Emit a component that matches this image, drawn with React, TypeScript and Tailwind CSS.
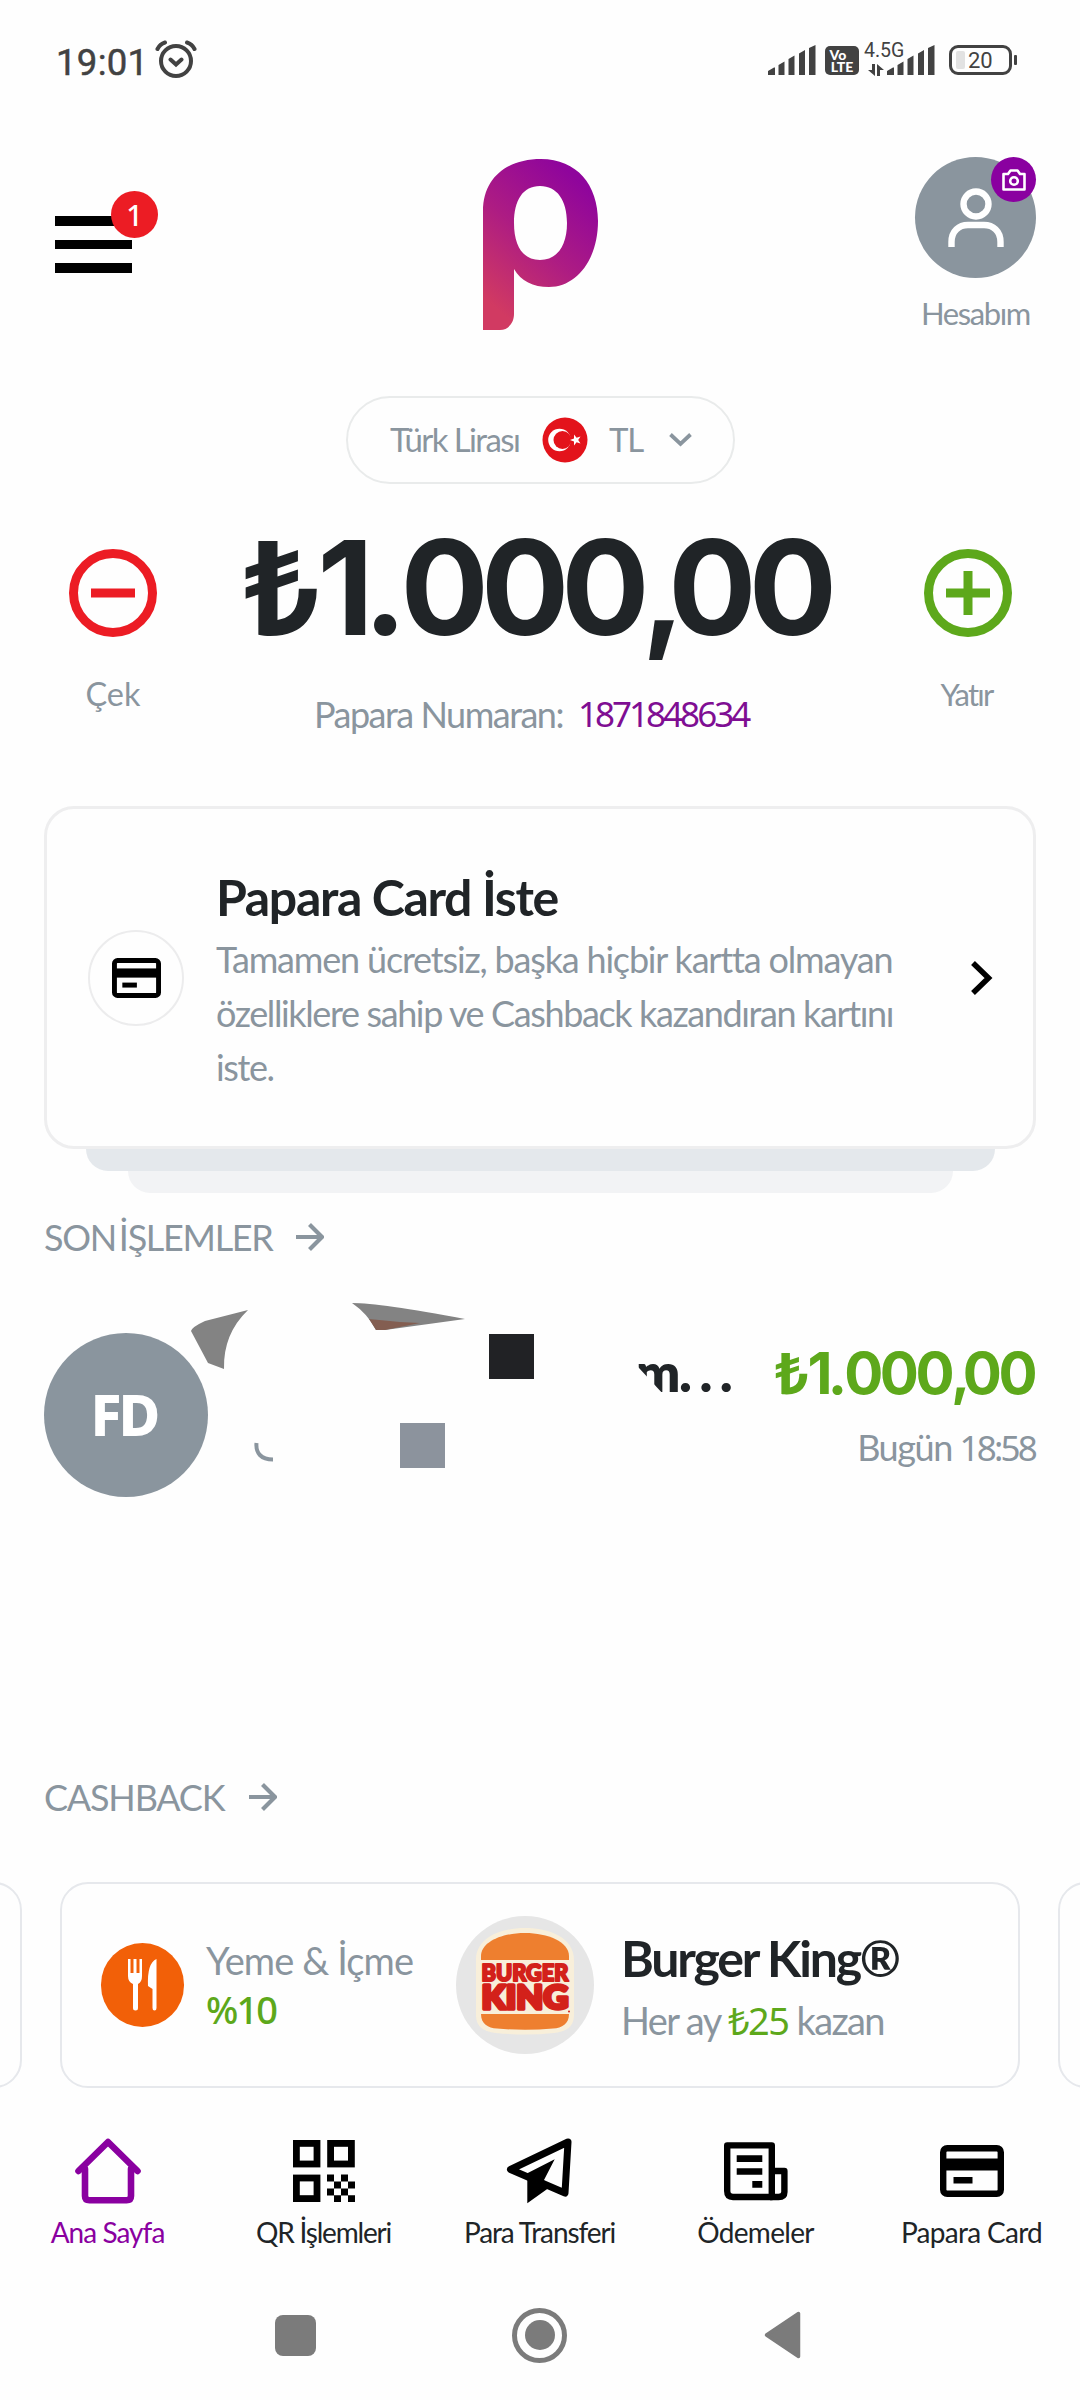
import React from 'react';

const CardIcon = ({ className }: { className: string }) => (
  <svg viewBox="0 0 64 52" className={className}>
    <rect x="3.2" y="3.2" width="57.6" height="45.6" rx="4" fill="none" stroke="black" strokeWidth="6.4" />
    <rect x="4" y="13.5" width="56" height="12" fill="black" />
    <rect x="13.5" y="32" width="19" height="6.5" fill="black" />
  </svg>
);

const HomeIcon = () => (
  <svg width="66" height="66" viewBox="0 0 66 66" fill="none" stroke="#8a00a0" strokeWidth="6.6" strokeLinecap="round" strokeLinejoin="round">
    <path d="M3.5 33L33 4L62.5 33" />
    <path d="M10 31V58Q10 62.3 14.5 62.3H51.5Q56 62.3 56 58V31" />
  </svg>
);

const QrIcon = () => (
  <svg width="62" height="62" viewBox="0 0 62 62">
    <g fill="none" stroke="black" strokeWidth="6.8">
      <rect x="3.4" y="3.4" width="20.6" height="20.6" />
      <rect x="37.6" y="3.4" width="20.8" height="20.6" />
      <rect x="3.4" y="38" width="20.6" height="20.6" />
    </g>
    <path d="M34 34.6h7v7h-7zM48 34.6h7v7h-7zM41 41.6h7v7h-7zM55 41.6h7v7h-7zM34 48.4h7v7h-7zM48 48.4h7v7h-7zM41 55.2h7v6.8h-7zM55 55.2h7v6.8h-7z" />
  </svg>
);

const SendIcon = () => (
  <svg width="68" height="68" viewBox="0 0 68 68">
    <path d="M62 5L4.5 32.5L59 56Z" fill="none" stroke="black" strokeWidth="7" strokeLinejoin="round" />
    <path d="M48.7 22.3L21.3 36.3V66.3L42.3 51.3L38 43Z" />
  </svg>
);

const BillIcon = () => (
  <svg width="64" height="59" viewBox="0 0 64 59">
    <g fill="none" stroke="black" strokeWidth="6.4" strokeLinejoin="round">
      <path d="M3.2 3.4H47.8V55H9Q3.2 55 3.2 49Z" />
      <path d="M48 29H60.4V50Q60.4 55 54.5 55H46" />
    </g>
    <path d="M12.7 13.3h25.6V20H12.7zM12.7 26.3h25.6v6.5H12.7zM28.3 39h10v6.7h-10z" />
  </svg>
);

const ArrowIcon = () => (
  <svg width="28" height="28" viewBox="0 0 28 28" fill="none" stroke="#8a959e" strokeWidth="4.2">
    <path d="M0 14H26M13.5 1.5L26 14L13.5 26.5" />
  </svg>
);

const Signal = () => (
  <svg width="48" height="30" viewBox="0 0 48 30" fill="#424242">
    <path d="M0 30V26L6 22.5H7V30ZM10.5 30V20L16.5 16.5V30ZM20.5 30V14L26.5 10.5V30ZM31 30V8.5L37 5V30ZM41 30V3L47.5 0V30Z" />
  </svg>
);

const Avatar = () => (
  <div className="relative flex h-[121px] w-[121px] items-center justify-center rounded-full bg-[#8a959e]">
    <svg width="56" height="60" viewBox="0 0 56 60" fill="none" stroke="white" strokeWidth="6.4">
      <circle cx="28" cy="16" r="12.5" />
      <path d="M3.5 59V54C3.5 43 11 37 20 37H36C45 37 52.5 43 52.5 54V59" />
    </svg>
    <div className="absolute right-0 top-0 flex h-[45px] w-[45px] items-center justify-center rounded-full bg-[#8a00a0]">
      <svg width="24" height="22" viewBox="0 0 24 22" fill="none" stroke="white" strokeWidth="2.6" strokeLinejoin="round">
        <path d="M1.5 5H6L8.5 1.5H15.5L18 5H22.5V20.5H1.5Z" />
        <circle cx="12" cy="12" r="3.8" />
      </svg>
    </div>
  </div>
);

const BurgerLogo = () => (
  <svg width="138" height="138" viewBox="0 0 138 138" className="shrink-0">
    <circle cx="69" cy="69" r="69" fill="#e6e6e6" />
    <path d="M20 44C20 22 44 12 69 12S118 22 118 44V99C118 112 108 116 98 117Q69 120 40 117C30 116 20 112 20 99Z" fill="#f8efda" />
    <path d="M25 44V40C25 26 46 17 69 17S113 26 113 40V44Z" fill="#ee7f2f" />
    <path d="M25 98H113C113 108 106 112 97 112.5Q69 115 41 112.5C32 112 25 108 25 98Z" fill="#ee7f2f" />
    <g fill="#d3211a" stroke="#d3211a" strokeLinejoin="round" fontFamily="Lato, sans-serif" fontWeight="900">
      <text x="25.5" y="65" fontSize="23.5" strokeWidth="2.2" textLength="87" lengthAdjust="spacingAndGlyphs">BURGER</text>
      <text x="25.5" y="93.3" fontSize="33" strokeWidth="3.6" textLength="87" lengthAdjust="spacingAndGlyphs">KING</text>
    </g>
    <circle cx="113" cy="95.5" r="1" fill="#d3211a" />
  </svg>
);

// Tight around the leading one and the separators
const Amount = ({ className }: { className: string }) => (
  <span className={`font-['Noto_Sans'] font-bold ${className}`}>
    <span className="tracking-[-0.02em]">₺</span>
    <span className="font-['Inter']">
      <span className="tracking-[-0.08em]">1</span>
      <span className="tracking-[-0.05em]">.</span>
      <span className="tracking-[-0.061em]">000</span>
      <span className="tracking-[-0.13em]">,</span>
      <span className="tracking-[-0.061em]">00</span>
    </span>
  </span>
);

const tabs = [
  { icon: <HomeIcon />, label: 'Ana Sayfa', style: 'text-[#8a00a0] tracking-[-0.95px]' },
  { icon: <QrIcon />, label: 'QR İşlemleri', style: 'text-[#202427] tracking-[-1.2px]' },
  { icon: <SendIcon />, label: 'Para Transferi', style: 'text-[#202427] tracking-[-1.1px]' },
  { icon: <BillIcon />, label: 'Ödemeler', style: 'text-[#202427] tracking-[-0.7px]' },
  { icon: <CardIcon className="h-[52px] w-[64px]" />, label: 'Papara Card', style: 'text-[#202427] tracking-[-0.7px]' },
];

export default function App() {
  return (
    <div className="flex h-[2400px] w-[1080px] flex-col overflow-hidden whitespace-nowrap bg-[#fefefe] font-['Lato',sans-serif] text-[#8a959e]">
      {/* Status bar */}
      <div className="flex h-[120px] shrink-0 items-start justify-between pl-[56px] pr-[63px] pt-[40px] font-['Roboto',sans-serif] text-[#424242]">
        <div className="flex">
          <span className="mt-px h-[44px] w-[99px] text-[36.5px] leading-[44px] tracking-[0.3px] [-webkit-text-stroke:0.5px_#424242]">19:01</span>
          <svg width="42" height="38" viewBox="0 0 42 38" fill="none" stroke="#424242" strokeWidth="4" strokeLinecap="round">
            <circle cx="21" cy="21" r="15" />
            <path d="M2.5 9Q5 4 10 2.5M39.5 9Q37 4 32 2.5M15.5 19.5L21 24.5L26.5 19.5" />
          </svg>
        </div>
        <div className="flex">
          <div className="mt-[5px]"><Signal /></div>
          <div className="ml-[9px] mt-[6px] flex h-[29px] w-[34px] flex-col items-center justify-center rounded-[5px] bg-[#424242] font-['Lato'] text-[14px] font-black leading-[12px] text-white">
            <span className="-ml-[8px]">Vo</span>
            <span>LTE</span>
          </div>
          <div className="ml-[5px] flex w-[23px] flex-col">
            <span className="h-[22px] text-[19.5px] leading-[22px]">4.5G</span>
            <svg width="16" height="12" viewBox="0 0 16 12" fill="#424242" className="ml-[4px] mt-[2px]">
              <path d="M4 0H7V12L0 6H4ZM9 12V0L16 6H12V12Z" />
            </svg>
          </div>
          <div className="mt-[5px]"><Signal /></div>
          <div className="ml-[14px] mt-[5px] flex h-[30px] w-[63px] items-center rounded-[9px] border-[3px] border-[#424242] pl-[4px]">
            <div className="h-[18px] w-[9px] rounded-[2px] bg-[#e2e2e2]" />
            <span className="ml-[3px] mt-px text-[22px] leading-[24px]">20</span>
          </div>
          <div className="ml-[2px] mt-[15px] h-[10px] w-[3px] rounded-[1px] bg-[#424242]" />
        </div>
      </div>

      {/* Header */}
      <div className="flex h-[276px] shrink-0 items-start pl-[55px] pr-[40px]">
        <div className="relative mt-[96px] flex w-[129px] flex-col gap-[14px]">
          <div className="h-[9.5px] w-[77px] bg-black" />
          <div className="h-[9.5px] w-[77px] bg-black" />
          <div className="h-[9.5px] w-[77px] bg-black" />
          <span className="absolute -top-[25px] left-[56px] flex h-[47px] w-[47px] items-center justify-center rounded-full bg-[#ec1c24] font-['Noto_Sans'] text-[29px] font-medium text-white">1</span>
        </div>
        <svg width="116" height="171" viewBox="0 0 116 171" className="ml-[299px] mt-[39px]">
          <defs>
            <linearGradient id="brand" gradientUnits="userSpaceOnUse" x1="100" y1="25" x2="2" y2="140">
              <stop offset="0" stopColor="#8f059c" />
              <stop offset="0.5" stopColor="#ad1c83" />
              <stop offset="1" stopColor="#d13a62" />
            </linearGradient>
          </defs>
          <path fillRule="evenodd" fill="url(#brand)" d="M0 171V52C0 18 25 0 58 0C94 0 115 26 115 62C115 100 94 128 66 128C50 128 38 122 31 110V155C31 164 25 171 17 171ZM31 64C31 87 40 101 57 101S84 87 84 64S74 27 57 27S31 41 31 64Z" />
        </svg>
        <div className="ml-auto mt-[37px] flex w-[129px] flex-col items-center">
          <Avatar />
          <span className="mt-[15px] text-[31px] leading-[40px] tracking-[-1.4px]">Hesabım</span>
        </div>
      </div>

      {/* Currency picker */}
      <div className="ml-[346px] flex h-[88px] w-[389px] shrink-0 items-center rounded-full border-2 border-[#e9ebeb] pl-[42px]">
        <span className="w-[152px] text-[33px] tracking-[-1.6px]">Türk Lirası</span>
        <svg width="46" height="46" viewBox="0 0 46 46">
          <circle cx="23" cy="23" r="22.5" fill="#e3131b" />
          <circle cx="17.5" cy="23" r="11.3" fill="white" />
          <circle cx="20.5" cy="23" r="9" fill="#e3131b" />
          <path d="M28 23L32 21.5V17.5L34.6 20.8L38.5 19.6L36.2 23L38.5 26.4L34.6 25.2L32 28.5V24.5Z" fill="white" />
        </svg>
        <span className="ml-[21px] w-[60px] text-[33px] tracking-[-1.2px]">TL</span>
        <svg width="23" height="14" viewBox="0 0 23 14" fill="none" stroke="#8a959e" strokeWidth="3.8"><path d="M1.5 1.5L11.5 11L21.5 1.5" /></svg>
      </div>

      {/* Balance */}
      <div className="flex h-[322px] shrink-0 items-start pt-[30px]">
        <div className="ml-[69px] mt-[35px] flex w-[88px] flex-col items-center">
          <svg width="88" height="88" viewBox="0 0 88 88" fill="none" stroke="#ec1c24" strokeWidth="9">
            <circle cx="44" cy="44" r="39.5" />
            <path d="M22 44H66" />
          </svg>
          <span className="mt-[37px] text-[32.5px] leading-[40px]">Çek</span>
        </div>
        <div className="flex w-[767px] flex-col">
          <Amount className="ml-[88px] h-[140px] text-[131px] leading-[140px] text-[#202427]" />
          <div className="ml-[157px] mt-[38px] flex h-[44px] items-center text-[36px] leading-[44px]">
            <span className="w-[264px] tracking-[-1.5px]">Papara Numaran:</span>
            <span className="font-['Noto_Sans'] text-[35px] tracking-[-3px] text-[#7f0e93]">1871848634</span>
          </div>
        </div>
        <div className="mt-[35px] flex w-[88px] flex-col items-center">
          <svg width="88" height="88" viewBox="0 0 88 88" fill="none" stroke="#5da81b" strokeWidth="9">
            <circle cx="44" cy="44" r="39.5" />
            <path d="M22 44H66M44 22V66" />
          </svg>
          <span className="-ml-[3px] mt-[37px] text-[31px] leading-[40px] tracking-[-1.8px]">Yatır</span>
        </div>
      </div>

      {/* Card offer, with the stacked cards behind it */}
      <div className="mx-[44px] flex h-[343px] shrink-0 items-center rounded-[30px] border-[3px] border-[#eeeeef] pl-[41px]">
        <div className="flex h-[96px] w-[96px] items-center justify-center rounded-full border-2 border-[#ececed]">
          <CardIcon className="h-[42px] w-[49px]" />
        </div>
        <div className="ml-[32px] flex w-[755px] flex-col pt-[6px]">
          <h2 className="text-[50px] font-bold leading-[60px] tracking-[-1.35px] text-[#202427]">Papara Card İste</h2>
          <p className="mt-[5px] text-[36px] leading-[54px] tracking-[-1.38px]">
            <span className="tracking-[-1.18px]">Tamamen ücretsiz, başka hiçbir kartta olmayan</span><br />
            özelliklere sahip ve Cashback kazandıran kartını<br />
            iste.
          </p>
        </div>
        <svg width="22" height="34" viewBox="0 0 22 34" fill="none" stroke="black" strokeWidth="5.5"><path d="M2 2L17.5 17L2 32" /></svg>
      </div>
      <div className="mx-auto h-[22px] w-[909px] shrink-0 rounded-b-[26px] bg-[#e4e8ec]" />
      <div className="mx-auto h-[22px] w-[825px] shrink-0 rounded-b-[26px] bg-[#f2f3f5]" />

      {/* Latest transactions */}
      <div className="mt-[22px] flex h-[44px] shrink-0 items-center pl-[44px] text-[36px] leading-[44px]">
        <span className="w-[252px] tracking-[-1.3px] [word-spacing:-5px]">SON İŞLEMLER</span>
        <ArrowIcon />
      </div>
      <div className="relative flex h-[516px] shrink-0 items-start pr-[42px] pt-[74px]">
        <div className="ml-[44px] flex h-[164px] w-[164px] shrink-0 items-center justify-center rounded-full bg-[#8a959e] pr-[4px] font-['Noto_Sans'] text-[57px] font-extrabold tracking-[-3px] text-white">FD</div>
        <span className="ml-[428px] mt-[7px] flex items-baseline text-[52px] font-extrabold leading-[64px] text-[#202427]">
          m<span className="ml-[-1px] tracking-[8px]">...</span>
        </span>
        <div className="ml-auto mt-[7px] flex flex-col items-end">
          <Amount className="mr-[4px] text-[58px] leading-[64px] text-[#5da81b]" />
          <span className="mr-[3px] mt-[20px] text-[36px] leading-[44px] tracking-[-1.45px]">Bugün <span className="font-['Noto_Sans'] text-[35px] tracking-[-2.8px]">18:58</span></span>
        </div>
        <svg width="520" height="200" viewBox="0 0 520 200" className="absolute left-[180px] top-[31px]">
          <path d="M11 41Q12 37 25 31L68 20Q43 44 44 79L28 73Z" fill="#838383" />
          <path d="M172 13Q200 13 285 29L205 40H196Q188 24 172 13Z" fill="#838383" />
          <path d="M189 29Q215 32 240 33L205 40H196Z" fill="#835e51" />
          <path d="M76.500 153C75.500 163 81 169.500 93 169.500" fill="none" stroke="#8a959e" strokeWidth="4" />
          <rect x="309" y="44" width="45" height="45" fill="#212225" />
          <rect x="220" y="133" width="45" height="45" fill="#8c939d" />
          <path d="M452 72L459 78L484 105V108H452Z" fill="#fefefe" />
        </svg>
      </div>

      {/* Cashback */}
      <div className="flex h-[44px] shrink-0 items-center pl-[44px] text-[36px] leading-[44px] tracking-[-1.2px]">
        <span className="w-[205px]">CASHBACK</span>
        <ArrowIcon />
      </div>
      <div className="mt-[63px] flex h-[206px] shrink-0 gap-[38px] overflow-hidden">
        <div className="-ml-[78px] w-[100px] shrink-0 rounded-[28px] border-2 border-[#e6e8ec]" />
        <div className="flex w-[960px] shrink-0 items-center rounded-[28px] border-2 border-[#e6e8ec] pl-[39px]">
          <div className="flex h-[84px] w-[83px] items-center justify-center rounded-full bg-[#f26008]">
            <svg width="32" height="52" viewBox="0 0 32 52" fill="white">
              <path d="M1 0H3.500V14H6.500V0H9.500V14H12.500V0H15V17Q15 23 11 25V49Q11 51.500 8.500 51.500T6 49V25Q1 23 1 17Z" />
              <path d="M29.500 0V49Q29.500 51.500 27.500 51.500T25.500 49V30L21 27Q20 4 29.500 0Z" />
            </svg>
          </div>
          <div className="ml-[22px] flex w-[250px] flex-col text-[38px] leading-[49px]">
            <span className="tracking-[-0.9px]">Yeme & İçme</span>
            <span className="font-['Noto_Sans'] font-medium tracking-[-1.9px] text-[#5da81b]">%10</span>
          </div>
          <BurgerLogo />
          <div className="ml-[27px] flex flex-col pt-[5px]">
            <span className="text-[50px] font-bold leading-[60px] tracking-[-2.2px] text-[#202427]">Burger King®</span>
            <span className="mt-[4px] text-[38px] leading-[56px] tracking-[-1.6px]">
              Her ay <span className="font-['Noto_Sans'] text-[#5da81b]">₺25</span> kazan
            </span>
          </div>
        </div>
        <div className="w-[100px] shrink-0 rounded-[28px] border-2 border-[#e6e8ec]" />
      </div>

      {/* Tab bar */}
      <div className="mt-[43px] grid shrink-0 grid-cols-5">
        {tabs.map((t) => (
          <div key={t.label} className="flex flex-col items-center">
            <div className="flex h-[80px] items-center">{t.icon}</div>
            <span className={`-ml-px mt-[3px] text-[28px] leading-[36px] ${t.style}`}>{t.label}</span>
          </div>
        ))}
      </div>

      {/* System navigation */}
      <div className="mt-[57px] flex h-[56px] shrink-0 items-center pl-[275px]">
        <div className="h-[41px] w-[41px] rounded-[8px] bg-[#7b7b7b]" />
        <div className="ml-[196px] flex h-[55px] w-[55px] items-center justify-center rounded-full border-[5px] border-[#7b7b7b]">
          <div className="h-[30px] w-[30px] rounded-full bg-[#7b7b7b]" />
        </div>
        <svg width="37" height="48" viewBox="0 0 37 48" className="ml-[197px]">
          <path d="M34.500 2.500V45.500L2.500 24Z" fill="#7b7b7b" stroke="#7b7b7b" strokeWidth="3.500" strokeLinejoin="round" />
        </svg>
      </div>
    </div>
  );
}
